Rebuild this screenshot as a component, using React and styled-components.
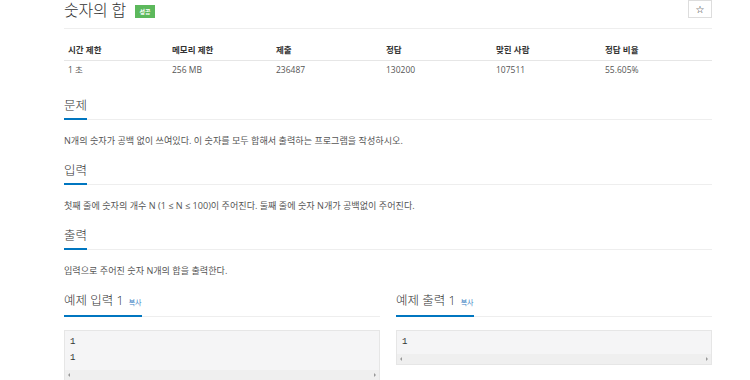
import styled, { createGlobalStyle } from "styled-components";

const GlobalStyle = createGlobalStyle`
    body {
        margin: 0;
        background: #fff;
        font-family: "Open Sans", "Noto Sans CJK KR", sans-serif;
        color: #555;
    }
`

const stats = [
    { label: "시간 제한", value: "1 초" },
    { label: "메모리 제한", value: "256 MB" },
    { label: "제출", value: "236487" },
    { label: "정답", value: "130200" },
    { label: "맞힌 사람", value: "107511" },
    { label: "정답 비율", value: "55.605%" },
]

const sections = [
    { title: "문제", text: "N개의 숫자가 공백 없이 쓰여있다. 이 숫자를 모두 합해서 출력하는 프로그램을 작성하시오." },
    { title: "입력", text: "첫째 줄에 숫자의 개수 N (1 ≤ N ≤ 100)이 주어진다. 둘째 줄에 숫자 N개가 공백없이 주어진다." },
    { title: "출력", text: "입력으로 주어진 숫자 N개의 합을 출력한다." },
]

const samples = [
    { title: "예제 입력 1", lines: ["1", "1"] },
    { title: "예제 출력 1", lines: ["1"] },
]

export default function App(){
    return(
        <Page>
            <GlobalStyle />
            <TitleRow>
                <Title>
                    숫자의 합
                    <Badge>성공</Badge>
                </Title>
                <StarButton>☆</StarButton>
            </TitleRow>

            <StatsTable>
                {stats.map((s) => <HeadCell key={s.label}>{s.label}</HeadCell>)}
                {stats.map((s) => <ValueCell key={s.label}>{s.value}</ValueCell>)}
            </StatsTable>

            {sections.map((s) => (
                <Section key={s.title}>
                    <HeadWrap>
                        <Head>{s.title}</Head>
                    </HeadWrap>
                    <Paragraph>{s.text}</Paragraph>
                </Section>
            ))}

            <SampleGrid>
                {samples.map((s) => (
                    <div key={s.title}>
                        <HeadWrap>
                            <Head>
                                {s.title}
                                <CopyLink>복사</CopyLink>
                            </Head>
                        </HeadWrap>
                        <PreBox>
                            <Code>
                                {s.lines.map((l, i) => <div key={i}>{l}</div>)}
                            </Code>
                            <ScrollTrack>
                                <Arrow dir="left" />
                                <Arrow dir="right" />
                            </ScrollTrack>
                        </PreBox>
                    </div>
                ))}
            </SampleGrid>
        </Page>
    )
}

const Page = styled.div`
    width: 648px;
    padding-left: 64px;
`

const TitleRow = styled.div`
    display: flex;
    justify-content: space-between;
    align-items: flex-start;
    height: 28px;
    border-bottom: 1px solid #eee;
`

const Title = styled.h1`
    margin: 0;
    display: flex;
    align-items: center;
    gap: 9px;
    font-size: 16px;
    font-weight: 300;
    line-height: 20px;
    color: #333;
    letter-spacing: -0.2px;
`

const Badge = styled.span`
    display: inline-flex;
    align-items: center;
    justify-content: center;
    width: 20px;
    height: 13px;
    margin-top: 3px;
    background: #5cb85c;
    color: #fff;
    font-size: 6px;
    font-weight: 700;
    letter-spacing: 0;
`

const StarButton = styled.div`
    width: 22px;
    height: 16px;
    border: 1px solid #ddd;
    display: flex;
    align-items: center;
    justify-content: center;
    font-size: 10px;
    color: #222;
    font-family: "DejaVu Sans", sans-serif;
`

const StatsTable = styled.div`
    display: grid;
    grid-template-columns: 104px 104px 110px 110px 109px 1fr;
    margin-top: 10px;
    font-size: 8.5px;
`

const HeadCell = styled.div`
    padding: 4px 4px 3px;
    line-height: 14px;
    font-weight: 700;
    color: #333;
    border-bottom: 1px solid #e6e6e6;
`

const ValueCell = styled.div`
    padding: 2px 4px 4px;
    line-height: 14px;
    color: #555;
`

const Section = styled.section`
    margin-top: 15px;

    &:first-of-type {
        margin-top: 17px;
    }
`

const HeadWrap = styled.div`
    display: flex;
    border-bottom: 1px solid #eee;
`

const Head = styled.h2`
    margin: 0 0 -1px;
    padding-bottom: 4px;
    border-bottom: 2px solid #0076c0;
    font-size: 12.5px;
    font-weight: 300;
    line-height: 16px;
    color: #333;
    display: flex;
    align-items: baseline;
    gap: 5px;
`

const CopyLink = styled.span`
    font-size: 7px;
    font-weight: 400;
    color: #3b7fc4;
`

const Paragraph = styled.p`
    margin: 14px 0 0;
    font-size: 9.1px;
    line-height: 14px;
    color: #555;
`

const SampleGrid = styled.div`
    display: grid;
    grid-template-columns: 1fr 1fr;
    gap: 16px;
    margin-top: 15px;
`

const PreBox = styled.div`
    margin-top: 13px;
    border: 1px solid #e6e6e6;
    background: #f5f5f6;
`

const Code = styled.div`
    padding: 3px 5px 4px;
    font-family: "Liberation Mono", monospace;
    font-size: 9px;
    line-height: 16px;
    color: #333;
`

const ScrollTrack = styled.div`
    height: 10px;
    background: #efefef;
    display: flex;
    justify-content: space-between;
    align-items: center;
    padding: 0 3px;
`

const Arrow = styled.span`
    width: 0;
    height: 0;
    border-top: 2px solid transparent;
    border-bottom: 2px solid transparent;
    ${(p) => p.dir === "left"
        ? "border-right: 2px solid #999;"
        : "border-left: 2px solid #999;"}
`
